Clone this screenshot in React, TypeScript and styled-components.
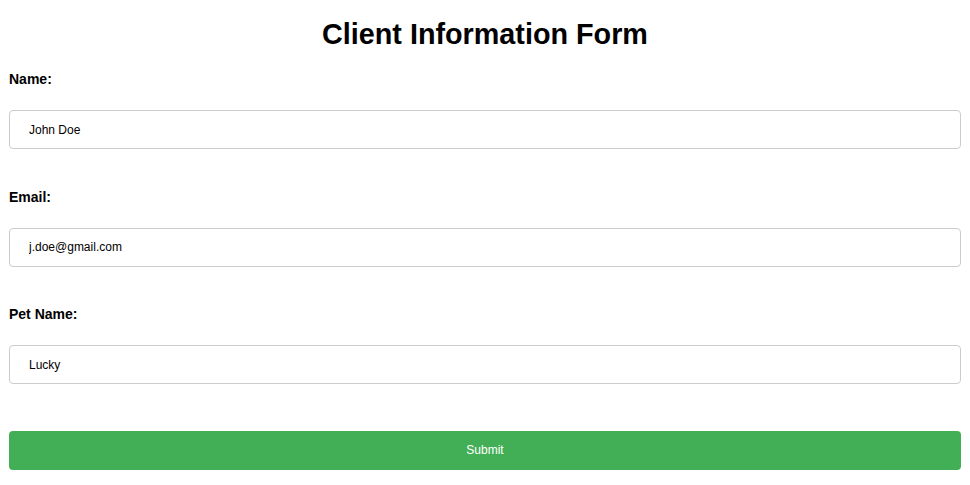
import React from "react";
import styled, { createGlobalStyle } from "styled-components";

const GlobalStyle = createGlobalStyle`
    body {
        margin: 0;
        background: #fff;
        font-family: "Liberation Sans", Arial, sans-serif;
        color: #000;
    }
`;

const Container = styled.div`
    padding: 18px 9px 0;
`;

const Title = styled.h1`
    margin: 0 0 21px;
    font-size: 28.75px;
    line-height: 32px;
    font-weight: bold;
    text-align: center;
`;

const Form = styled.form`
    display: flex;
    flex-direction: column;
`;

const Field = styled.div`
    display: flex;
    flex-direction: column;
    margin-bottom: 39.5px;
`;

const Label = styled.label`
    font-size: 14px;
    line-height: 16px;
    font-weight: bold;
    margin-bottom: 23px;
`;

const Input = styled.input`
    box-sizing: border-box;
    width: 100%;
    height: 39px;
    padding: 0 19px;
    border: 1px solid #cccccc;
    border-radius: 4px;
    font-family: "Liberation Sans", Arial, sans-serif;
    font-size: 12px;
    color: #000;
    outline: none;
`;

const Button = styled.button`
    box-sizing: border-box;
    width: 100%;
    height: 39px;
    margin-top: 7px;
    border: none;
    border-radius: 4px;
    background: #42af56;
    color: #fff;
    font-family: "Liberation Sans", Arial, sans-serif;
    font-size: 12px;
    cursor: pointer;
`;

const fields = [
    { id: "name", label: "Name:", value: "John Doe" },
    { id: "email", label: "Email:", value: "j.doe@gmail.com" },
    { id: "pet", label: "Pet Name:", value: "Lucky" },
];

const App = () => {
    return (
        <Container>
            <GlobalStyle />
            <Title>Client Information Form</Title>
            <Form onSubmit={(e) => e.preventDefault()}>
                {fields.map((f) => (
                    <Field key={f.id}>
                        <Label htmlFor={f.id}>{f.label}</Label>
                        <Input id={f.id} defaultValue={f.value} />
                    </Field>
                ))}
                <Button type="submit">Submit</Button>
            </Form>
        </Container>
    );
};

export default App;
